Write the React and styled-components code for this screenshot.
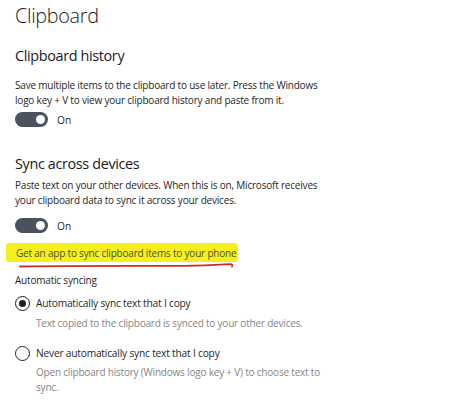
import React from 'react';
import styled, { createGlobalStyle } from 'styled-components';

const GlobalStyle = createGlobalStyle`
  body {
    margin: 0;
    background: #ffffff;
    font-family: "Open Sans", "Noto Sans", sans-serif;
    color: #1f1f1f;
  }
`;

const Page = styled.div`
  display: flex;
  flex-direction: column;
  align-items: flex-start;
  width: 460px;
  height: 403px;
  padding: 2px 15px 0;
  box-sizing: border-box;
  overflow: hidden;
  background: #fff;
`;

const Title = styled.h1`
  margin: 0;
  font-size: 19.8px;
  line-height: 28px;
  font-weight: 300;
  letter-spacing: -0.3px;
  color: #1a1a1a;
`;

const SectionHeading = styled.h2`
  margin: ${p => p.$top}px 0 0;
  font-size: 14.4px;
  line-height: 20px;
  font-weight: 400;
  letter-spacing: -0.35px;
  color: #1a1a1a;
`;

const Paragraph = styled.p`
  margin: ${p => p.$top}px 0 0;
  width: 316px;
  font-size: 10px;
  line-height: 15px;
  letter-spacing: -0.2px;
  color: #262626;
`;

const ToggleRow = styled.div`
  display: flex;
  align-items: center;
  gap: 9px;
  height: 16px;
  margin-top: ${p => p.$top}px;
  font-size: 10.2px;
  color: #262626;
`;

const Track = styled.div`
  display: flex;
  align-items: center;
  justify-content: flex-end;
  width: 33px;
  height: 15px;
  padding: 0 3px;
  box-sizing: border-box;
  border-radius: 8px;
  background: #4a5260;
`;

const Knob = styled.div`
  width: 9px;
  height: 9px;
  border-radius: 50%;
  background: #fff;
`;

const LinkWrap = styled.div`
  position: relative;
  margin: 9.5px 0 0 -9px;
  height: 19px;
  display: flex;
  align-items: center;
  padding: 0 2px 0 10px;
  background: #f5ef1e;
  border-radius: 2px 4px 3px 2px;
`;

const Link = styled.a`
  font-size: 10px;
  letter-spacing: -0.2px;
  color: #50502c;
  text-decoration: none;
  cursor: pointer;
`;

const Scribble = styled.svg`
  position: absolute;
  left: 12px;
  top: 19px;
  overflow: visible;
`;

const Label = styled.div`
  margin-top: 10px;
  font-size: 10px;
  line-height: 16px;
  letter-spacing: -0.2px;
  color: #1f1f1f;
`;

const RadioRow = styled.label`
  display: flex;
  align-items: center;
  gap: 6px;
  height: 20px;
  margin-top: ${p => p.$top}px;
  font-size: 10.2px;
  letter-spacing: -0.2px;
  color: #1f1f1f;
`;

const RadioCircle = styled.span`
  display: flex;
  align-items: center;
  justify-content: center;
  width: 15px;
  height: 15px;
  box-sizing: border-box;
  border: 1.6px solid #1f1f1f;
  border-radius: 50%;

  &::after {
    content: '';
    width: 7px;
    height: 7px;
    border-radius: 50%;
    background: ${p => (p.$checked ? '#1f1f1f' : 'transparent')};
  }
`;

const Hint = styled.p`
  margin: ${p => p.$top}px 0 0 21px;
  width: 300px;
  font-size: 10px;
  line-height: 15px;
  letter-spacing: -0.2px;
  color: #858585;
`;

const Toggle = ({ top }) => (
  <ToggleRow $top={top}>
    <Track>
      <Knob />
    </Track>
    <span>On</span>
  </ToggleRow>
);

const App = () => (
  <>
    <GlobalStyle />
    <Page>
      <Title>Clipboard</Title>

      <SectionHeading $top={16}>Clipboard history</SectionHeading>
      <Paragraph $top={11.5}>
        Save multiple items to the clipboard to use later. Press the Windows
        logo key + V to view your clipboard history and paste from it.
      </Paragraph>
      <Toggle top={4} />

      <SectionHeading $top={26}>Sync across devices</SectionHeading>
      <Paragraph $top={4}>
        Paste text on your other devices. When this is on, Microsoft receives
        your clipboard data to sync it across your devices.
      </Paragraph>
      <Toggle top={10} />

      <LinkWrap>
        <Link>Get an app to sync clipboard items to your phone</Link>
        <Scribble width="216" height="6" viewBox="0 0 216 6">
          <path
            d="M2 4.5 C60 3.6 120 4 166 3.8 C191 3.6 204 2.6 212 2.2 C214 2.4 215 3 214 4.6"
            fill="none"
            stroke="#d12a26"
            strokeWidth="1.8"
            strokeLinecap="round"
          />
        </Scribble>
      </LinkWrap>

      <Label>Automatic syncing</Label>

      <RadioRow $top={5}>
        <RadioCircle $checked />
        Automatically sync text that I copy
      </RadioRow>
      <Hint $top={2.5}>Text copied to the clipboard is synced to your other devices.</Hint>

      <RadioRow $top={12.5}>
        <RadioCircle />
        Never automatically sync text that I copy
      </RadioRow>
      <Hint $top={1.5}>
        Open clipboard history (Windows logo key + V) to choose text to sync.
      </Hint>
    </Page>
  </>
);

export default App;
